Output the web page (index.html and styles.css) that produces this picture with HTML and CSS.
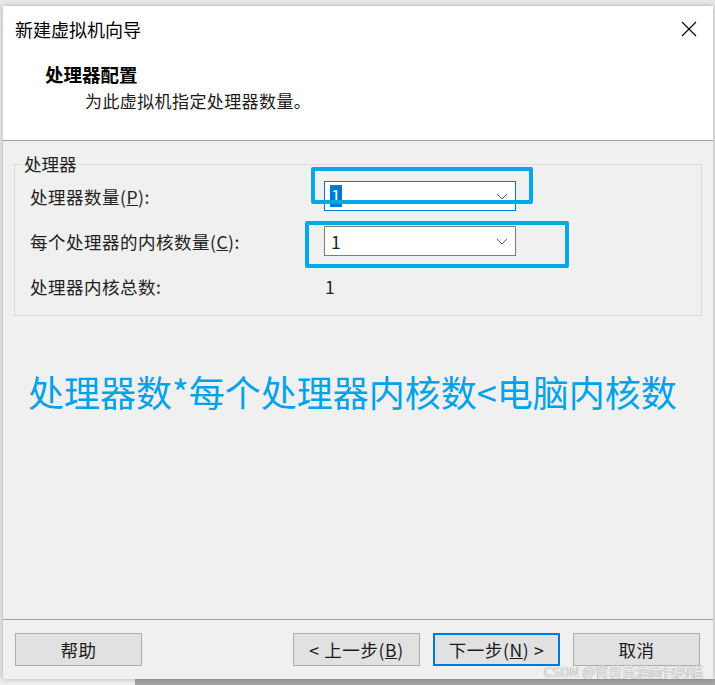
FILE: index.html
```html
<!DOCTYPE html>
<html lang="zh-CN">

<head>
    <meta charset="UTF-8">
    <title>新建虚拟机向导</title>
    <link rel="stylesheet" href="styles.css">
</head>

<body>

    <div class="window">
        <header class="head">
            <div class="titlebar">
                <span class="title">新建虚拟机向导</span>
                <svg class="close" width="16" height="16" viewBox="0 0 16 16">
                    <path d="M1 1L15 15M15 1L1 15" stroke="#000" stroke-width="1.1" fill="none" />
                </svg>
            </div>
            <div class="step">处理器配置</div>
            <div class="step-desc">为此虚拟机指定处理器数量。</div>
        </header>

        <main class="content">
            <fieldset class="group">
                <legend>处理器</legend>
                <div class="row">
                    <label>处理器数量(<u>P</u>):</label>
                    <div class="combo focused">
                        <span class="sel">1</span>
                        <svg width="12" height="7" viewBox="0 0 12 7"><path d="M1 1l5 5 5-5" stroke="#5a5a5a" fill="none" /></svg>
                    </div>
                </div>
                <div class="row">
                    <label>每个处理器的内核数量(<u>C</u>):</label>
                    <div class="combo">
                        <span class="val">1</span>
                        <svg width="12" height="7" viewBox="0 0 12 7"><path d="M1 1l5 5 5-5" stroke="#5a5a5a" fill="none" /></svg>
                    </div>
                </div>
                <div class="row">
                    <label>处理器内核总数:</label>
                    <span class="total">1</span>
                </div>
            </fieldset>

            <!-- hand drawn highlight boxes -->
            <div class="mark mark-1"></div>
            <div class="mark mark-2"></div>

            <p class="note">处理器数*每个处理器内核数&lt;电脑内核数</p>
        </main>

        <footer class="foot">
            <button class="btn">帮助</button>
            <div class="nav">
                <button class="btn">&lt; 上一步(<u>B</u>)</button>
                <button class="btn primary">下一步(<u>N</u>) &gt;</button>
                <button class="btn">取消</button>
            </div>
        </footer>

        <span class="watermark">CSDN @背着黄油面包的猫</span>
    </div>

    <div class="under">
        <div class="under-light"></div>
        <div class="under-dark"></div>
    </div>

</body>
</html>
```

FILE: styles.css
```css
* {
    box-sizing: border-box;
    margin: 0;
    padding: 0;
    font-family: "Noto Sans CJK SC", "Noto Sans", sans-serif;
}

html, body {
    width: 100%;
    height: 100%;
    overflow: hidden;
    background: #e8e8e8;
    color: #000;
}

.window {
    position: relative;
    display: flex;
    flex-direction: column;
    height: 673px;
    margin: 6px 2px 0 3px;
    background: #f0f0f0;
    box-shadow: 0 0 5px rgba(0, 0, 0, 0.25);
}

.head {
    height: 135px;
    background: #fff;
    border-bottom: 1px solid #a0a0a0;
}

.titlebar {
    display: flex;
    justify-content: space-between;
    align-items: center;
    height: 46px;
    padding: 0 16px 0 12px;
}

.title {
    font-size: 18px;
}

.step {
    margin-top: 12px;
    padding-left: 42px;
    font-size: 18.5px;
    font-weight: bold;
    line-height: 20px;
}

.step-desc {
    margin-top: 7px;
    padding-left: 82px;
    font-size: 17px;
    letter-spacing: 0.4px;
    line-height: 20px;
    color: #1a1a1a;
}

.content {
    position: relative;
    flex: 1;
    padding: 13px 11px 0;
    font-size: 17.5px;
}

.group {
    border: 1px solid #dcdcdc;
    padding: 7px 15px 14px;
    display: flex;
    flex-direction: column;
    gap: 15px;
}

.group legend {
    margin-left: -8px;
    padding: 0 2px;
    line-height: 20px;
    color: #222;
}

.row {
    display: grid;
    grid-template-columns: 294px 192px;
    align-items: center;
    height: 30px;
    color: #222;
}

.row label {
    letter-spacing: 0.5px;
}

.combo {
    display: flex;
    justify-content: space-between;
    align-items: center;
    height: 30px;
    padding: 0 7px 0 5px;
    background: #fff;
    border: 1px solid #7a7a7a;
}

.combo.focused {
    border-color: #0078d7;
}

.sel {
    background: #0078d7;
    color: #fff;
    line-height: 22px;
    padding: 0 1px;
}

.val {
    padding-left: 1px;
}

.total {
    padding-left: 1px;
}

.mark {
    position: absolute;
    border: 4px solid #00a8ea;
    border-radius: 2px;
}

.mark-1 {
    left: 308px;
    top: 26px;
    width: 222px;
    height: 37px;
}

.mark-2 {
    left: 302px;
    top: 80px;
    width: 264px;
    height: 47px;
}

.note {
    margin: 53px 0 0 14px;
    font-size: 36px;
    line-height: 44px;
    color: #00a2e8;
}

.foot {
    display: flex;
    height: 60px;
    padding: 13px 13px 0 12px;
    border-top: 1px solid #a0a0a0;
}

.nav {
    display: flex;
    gap: 13px;
    margin-left: auto;
}

.btn {
    width: 127px;
    height: 33px;
    background: #e1e1e1;
    border: 1px solid #adadad;
    font-size: 17.5px;
    letter-spacing: 0.6px;
    color: #1a1a1a;
}

.btn.primary {
    border: 2px solid #0078d7;
}

.watermark {
    position: absolute;
    right: 10px;
    bottom: 0;
    font-size: 13.5px;
    line-height: 16px;
    color: #f2f2f2;
    text-shadow: 0 0 1px #8c8c8c, 0 0 1px #a0a0a0;
}

.under {
    display: flex;
    height: 6px;
}

.under-light {
    width: 135px;
    background: #eeeeee;
}

.under-dark {
    flex: 1;
    background: #a3a3a3;
}
```
